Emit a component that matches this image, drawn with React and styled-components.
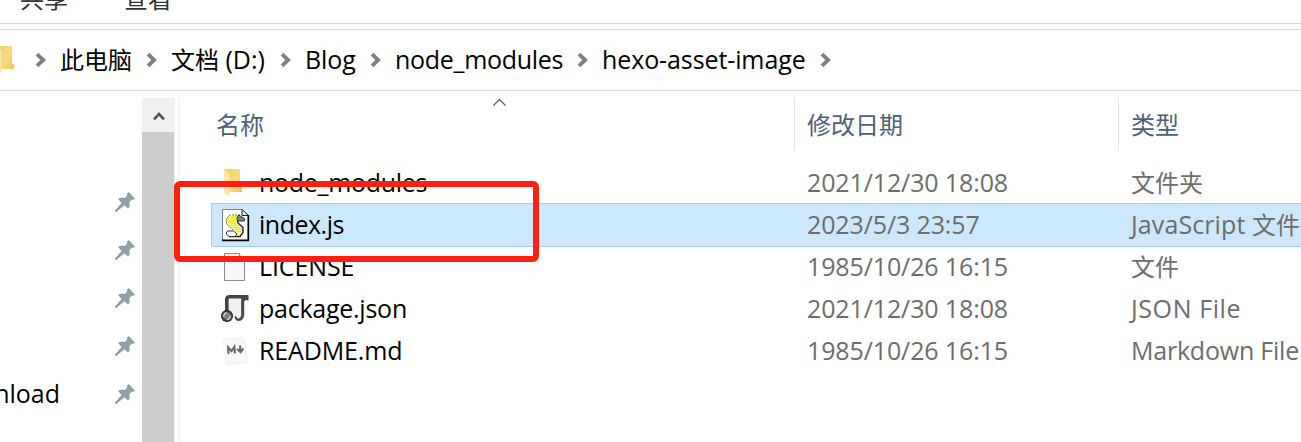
import React from 'react';
import styled, { createGlobalStyle } from 'styled-components';

const GlobalStyle = createGlobalStyle`
  * { box-sizing: border-box; }
  body { margin: 0; background: #fff; overflow: hidden; }
  svg { display: block; flex: none; }
`;

const Window = styled.div`
  position: relative;
  display: flex;
  flex-direction: column;
  width: 1301px;
  height: 442px;
  overflow: hidden;
  background: #fff;
  color: #000;
  font-family: 'Open Sans', 'Noto Sans CJK SC', sans-serif;
  font-size: 25px;
  white-space: nowrap;
`;

const Han = styled.span`
  font-family: 'Noto Sans CJK SC', sans-serif;
  font-size: 24px;
  line-height: 1;
  letter-spacing: 0;
`;

const Label = styled.span`
  letter-spacing: ${(p) => p.$track || 0}px;
`;

const Ribbon = styled.div`
  display: flex;
  gap: 56px;
  height: 24px;
  padding-left: 20px;
  border-bottom: 1px solid #d9d9d9;
  color: #333;
  overflow: hidden;
`;

const RibbonTab = styled(Han)`
  margin-top: -14px;
`;

const AddressBar = styled.div`
  display: flex;
  align-items: center;
  height: 62px;
  margin-top: 5px;
  border-top: 1px solid #d9d9d9;
  border-bottom: 1px solid #d9d9d9;
  line-height: 34px;
`;

const Crumb = styled.span`
  width: ${(p) => p.$w}px;
  margin-left: 13px;
  padding-bottom: 2px;
  letter-spacing: ${(p) => p.$track || 0}px;
`;

const CrumbArrow = styled.svg`
  margin-left: ${(p) => p.$gap}px;
`;

const Body = styled.div`
  display: flex;
  flex: 1;
  padding-top: 7px;
`;

const Sidebar = styled.div`
  width: 142px;
  padding: 80px 7px 0 0;
  overflow: hidden;
`;

const SideItem = styled.div`
  display: flex;
  align-items: center;
  justify-content: flex-end;
  gap: 55px;
  height: 48px;

  ${Label} {
    padding-bottom: 2px;
  }
`;

const Scrollbar = styled.div`
  display: flex;
  flex-direction: column;
  width: 33px;
  background: #f0f0f0;
`;

const ScrollButton = styled.div`
  display: flex;
  align-items: center;
  justify-content: center;
  height: 34px;
  padding-top: 2px;
`;

const Thumb = styled.div`
  flex: 1;
  width: 32px;
  background: #cdcdcd;
`;

const FilePane = styled.div`
  flex: 1;
  min-width: 0;
  margin-left: 3px;
  padding-left: 31px;
  border-left: 2px solid #f5f5f5;
  overflow: hidden;
`;

const columns = 'grid-template-columns: 583px 324px 183px;';

const HeaderRow = styled.div`
  display: grid;
  ${columns}
  height: 52px;
  margin-bottom: 12px;
`;

const HeaderCell = styled.div`
  position: relative;
  display: flex;
  align-items: center;
  padding: 0 0 1px ${(p) => (p.$first ? 5 : 12)}px;
  border-left: ${(p) => (p.$first ? 0 : 1)}px solid #e2e2e2;
  color: #4c607a;
`;

const SortMark = styled.svg`
  position: absolute;
  left: 282px;
  top: 0;
`;

const Row = styled.div`
  display: grid;
  ${columns}
  align-items: center;
  height: ${(p) => (p.$selected ? 44 : 42)}px;
  margin: ${(p) => (p.$selected ? '-1px 0' : '0')};
  line-height: 34px;
  background: ${(p) => (p.$selected ? '#cce8ff' : 'transparent')};
  border: solid #99d1ff;
  border-width: ${(p) => (p.$selected ? '1px 0 1px 1px' : '0')};
  padding-left: ${(p) => (p.$selected ? 0 : 1)}px;
`;

const NameCell = styled.div`
  display: flex;
  align-items: center;
  padding-left: 8px;
  gap: 7px;

  ${Label} {
    padding-bottom: 2px;
  }
`;

const InfoCell = styled.div`
  padding: 0 0 2px 12px;
  color: #6d6d6d;
  letter-spacing: ${(p) => p.$track || 0}px;
`;

const Highlight = styled.div`
  position: absolute;
  left: 174px;
  top: 181px;
  width: 365px;
  height: 81px;
  border: 6px solid #ff2010;
  border-radius: 6px;
`;

const Arrow = ({ gap }) => (
  <CrumbArrow $gap={gap} width="12" height="16" viewBox="0 0 12 16">
    <path d="M2 2.2 L8.2 8 L2 13.8" fill="none" stroke="#808080" strokeWidth="3.8" />
  </CrumbArrow>
);

const Pin = () => (
  <svg width="20" height="20" viewBox="0 0 20 20">
    <path
      d="M13.6 0 L20 6.4 L18.4 7.8 L16.4 8 L14.2 10.4 C15 12.6 14.6 15 13.2 16.6 L9.2 13.2 L1.8 19.8 L0 20 L0.2 18.2 L6.6 11 L3.2 7.2 C5 5.6 7.6 5.4 9.8 6 L12 3.8 L12.2 1.6 Z"
      fill="#929da5"
    />
  </svg>
);

const FolderShape = () => (
  <>
    <path d="M4 1 H20 V18 L22 20 V24 H8 Z" fill="#f2d06e" />
    <path d="M9 1 H20 V18 L22 20 V24 H9 Z" fill="url(#folderFace)" />
    <path d="M4 1 L9.5 5.5 V20 L8.5 28 L4 24.5 Z" fill="#ffe9a6" />
    <path d="M9.5 5.5 V20 L8.5 28" fill="none" stroke="#f5dc8c" strokeWidth="0.8" />
    <defs>
      <linearGradient id="folderFace" x1="0" y1="0" x2="1" y2="1">
        <stop offset="0" stopColor="#f0d278" />
        <stop offset="0.5" stopColor="#fadb82" />
        <stop offset="1" stopColor="#e6c260" />
      </linearGradient>
    </defs>
  </>
);

const FolderIcon = () => (
  <svg width="32" height="30" viewBox="0 0 32 30">
    <FolderShape />
  </svg>
);

const CroppedFolder = () => (
  <svg width="15" height="30" viewBox="8 0 15 30">
    <FolderShape />
  </svg>
);

const ScriptIcon = () => (
  <svg width="32" height="34" viewBox="0 0 32 34">
    <path d="M2.5 1.5 H22 L28.5 7.5 V32.5 H2.5 Z" fill="#fff" />
    <path d="M2.5 32 V1.5 H22" fill="none" stroke="#808080" />
    <path d="M22 1.5 V7.5 H28.5 Z" fill="#e4e4e4" stroke="#222" strokeWidth="1" />
    <path d="M28.3 7 V32.3 H2" fill="none" stroke="#000" strokeWidth="1.7" />
    <path
      d="M10 7 H20 L17.5 12 L18 15 L23 19.5 V24.5 L20 28.5 H9 L6.5 26 V22.5 H13 L12.5 21 L6.5 16 V10.5 Z"
      fill="#fffcb8"
    />
    <path
      d="M10.5 8.8 H17 M8.5 10.9 H16 M8 13 H16 M9 15.1 H16.5 M11 17.2 H19.5 M13 19.3 H21.5 M14.5 21.4 H22 M15.5 23.5 H21 M9.5 25.2 H14"
      stroke="#f0e200"
      strokeWidth="1.3"
    />
    <path d="M20 7 H10 L6.5 10.5 V16 L12.5 21 L13 22.5" fill="none" stroke="#6f6a20" strokeWidth="1" strokeDasharray="2 1" />
    <path d="M17.5 12.5 L18 15 L23 19.5 V24.5 L20 28.5 H9" fill="none" stroke="#222" strokeWidth="1.4" />
    <path d="M18.5 7 L24.5 10.5 V13 H17.5 L16.8 10.5 Z" fill="#858585" stroke="#222" strokeWidth="0.9" />
    <path d="M13.5 23 H8 L6.5 24 V26.5 L9 28.5 H15 L17 26 Z" fill="#fff" stroke="#333" strokeWidth="1" />
  </svg>
);

const FileIcon = () => (
  <svg width="32" height="30" viewBox="0 0 32 30">
    <path d="M4.5 1.5 H19.5 L24.5 6.5 V28.5 H4.5 Z" fill="#f7f7f7" stroke="#8a8a8a" />
    <path d="M19.5 1.5 V6.5 H24.5" fill="#fff" stroke="#8a8a8a" />
  </svg>
);

const JsonIcon = () => (
  <svg width="32" height="32" viewBox="0 0 32 32">
    <defs>
      <radialGradient id="knob">
        <stop offset="0.2" stopColor="#b5b5b5" />
        <stop offset="0.55" stopColor="#666" />
        <stop offset="1" stopColor="#161616" />
      </radialGradient>
    </defs>
    <path d="M7 5 H22 V22 L18 27 H9 Z" fill="#f1f1f1" />
    <path d="M6.8 19 V6.5 Q6.8 3.8 9.5 3.8 H27.8" fill="none" stroke="#444" strokeWidth="3.6" />
    <path d="M28.5 2 V7.5 Q24.8 6 24.2 8.5 V22 Q23.6 27.6 19 28 Q14.8 28 14.6 23.2 L16.2 23.2 Q16.8 25.8 18.4 25.6 Q21 25.2 21.2 21.5 V5 Z" fill="#444" />
    <circle cx="7" cy="23" r="6" fill="url(#knob)" />
    <path d="M3.8 24 Q3.4 20.4 6.6 19.6 M10.2 22.5 Q10.4 26.2 7 26.6" fill="none" stroke="#ddd" strokeWidth="1.3" />
    <circle cx="7" cy="23" r="2" fill="#777" />
  </svg>
);

const MarkdownIcon = () => (
  <svg width="32" height="32" viewBox="0 0 32 32">
    <path d="M3 4.5 L22.5 2.5 L24 4 L28 27 L6.5 30 Z" fill="#f7f7f7" stroke="#ebebeb" strokeWidth="0.7" />
    <g fill="none" stroke="#686868" strokeWidth="2.1">
      <path d="M8.5 19 L8.1 12.4 L11.5 16 L14.4 11.8 L15 18.4" />
      <path d="M20.2 10.5 V16.5 M17.1 14 L20.6 17.2 L23.4 13.4" />
    </g>
  </svg>
);

const files = [
  { icon: FolderIcon, name: 'node_modules', track: -0.3, date: '2021/12/30 18:08', dateTrack: -0.12, type: <Han>文件夹</Han> },
  { icon: ScriptIcon, name: 'index.js', track: -0.5, date: '2023/5/3 23:57', dateTrack: -0.12, type: <>JavaScript <Han>文件</Han></>, typeTrack: 0.1, selected: true },
  { icon: FileIcon, name: 'LICENSE', track: -0.1, date: '1985/10/26 16:15', dateTrack: -0.12, type: <Han>文件</Han> },
  { icon: JsonIcon, name: 'package.json', track: -0.25, date: '2021/12/30 18:08', dateTrack: -0.12, type: 'JSON File', typeTrack: 0.6 },
  { icon: MarkdownIcon, name: 'README.md', track: -0.15, date: '1985/10/26 16:15', dateTrack: -0.12, type: 'Markdown File', typeTrack: -0.22 },
];

export default function App() {
  return (
    <Window>
      <GlobalStyle />
      <Ribbon>
        <RibbonTab>共享</RibbonTab>
        <RibbonTab>查看</RibbonTab>
      </Ribbon>
      <AddressBar>
        <CroppedFolder />
        <Arrow gap={20} />
        <Crumb $w={72}><Han>此电脑</Han></Crumb>
        <Arrow gap={14} />
        <Crumb $w={95}><Han>文档</Han> (D:)</Crumb>
        <Arrow gap={14} />
        <Crumb $w={51} $track={-0.1}>Blog</Crumb>
        <Arrow gap={14} />
        <Crumb $w={168} $track={-0.3}>node_modules</Crumb>
        <Arrow gap={14} />
        <Crumb $w={204} $track={-0.1}>hexo-asset-image</Crumb>
        <Arrow gap={14} />
      </AddressBar>
      <Body>
        <Sidebar>
          <SideItem><Pin /></SideItem>
          <SideItem><Pin /></SideItem>
          <SideItem><Pin /></SideItem>
          <SideItem><Pin /></SideItem>
          <SideItem><Label>Download</Label><Pin /></SideItem>
        </Sidebar>
        <Scrollbar>
          <ScrollButton>
            <svg width="12" height="10" viewBox="0 0 12 10">
              <path d="M1 8.3 L6 3 L11 8.3" fill="none" stroke="#555" strokeWidth="2.6" />
            </svg>
          </ScrollButton>
          <Thumb />
        </Scrollbar>
        <FilePane>
          <HeaderRow>
            <HeaderCell $first>
              <Han>名称</Han>
              <SortMark width="14" height="9" viewBox="0 0 14 9">
                <path d="M0.5 7.5 L6.5 1.5 L12.5 7.5" fill="none" stroke="#555" strokeWidth="1.1" />
              </SortMark>
            </HeaderCell>
            <HeaderCell><Han>修改日期</Han></HeaderCell>
            <HeaderCell><Han>类型</Han></HeaderCell>
          </HeaderRow>
          {files.map((f) => (
            <Row key={f.name} $selected={f.selected}>
              <NameCell><f.icon /><Label $track={f.track}>{f.name}</Label></NameCell>
              <InfoCell $track={f.dateTrack}>{f.date}</InfoCell>
              <InfoCell $track={f.typeTrack}>{f.type}</InfoCell>
            </Row>
          ))}
        </FilePane>
      </Body>
      <Highlight />
    </Window>
  );
}
